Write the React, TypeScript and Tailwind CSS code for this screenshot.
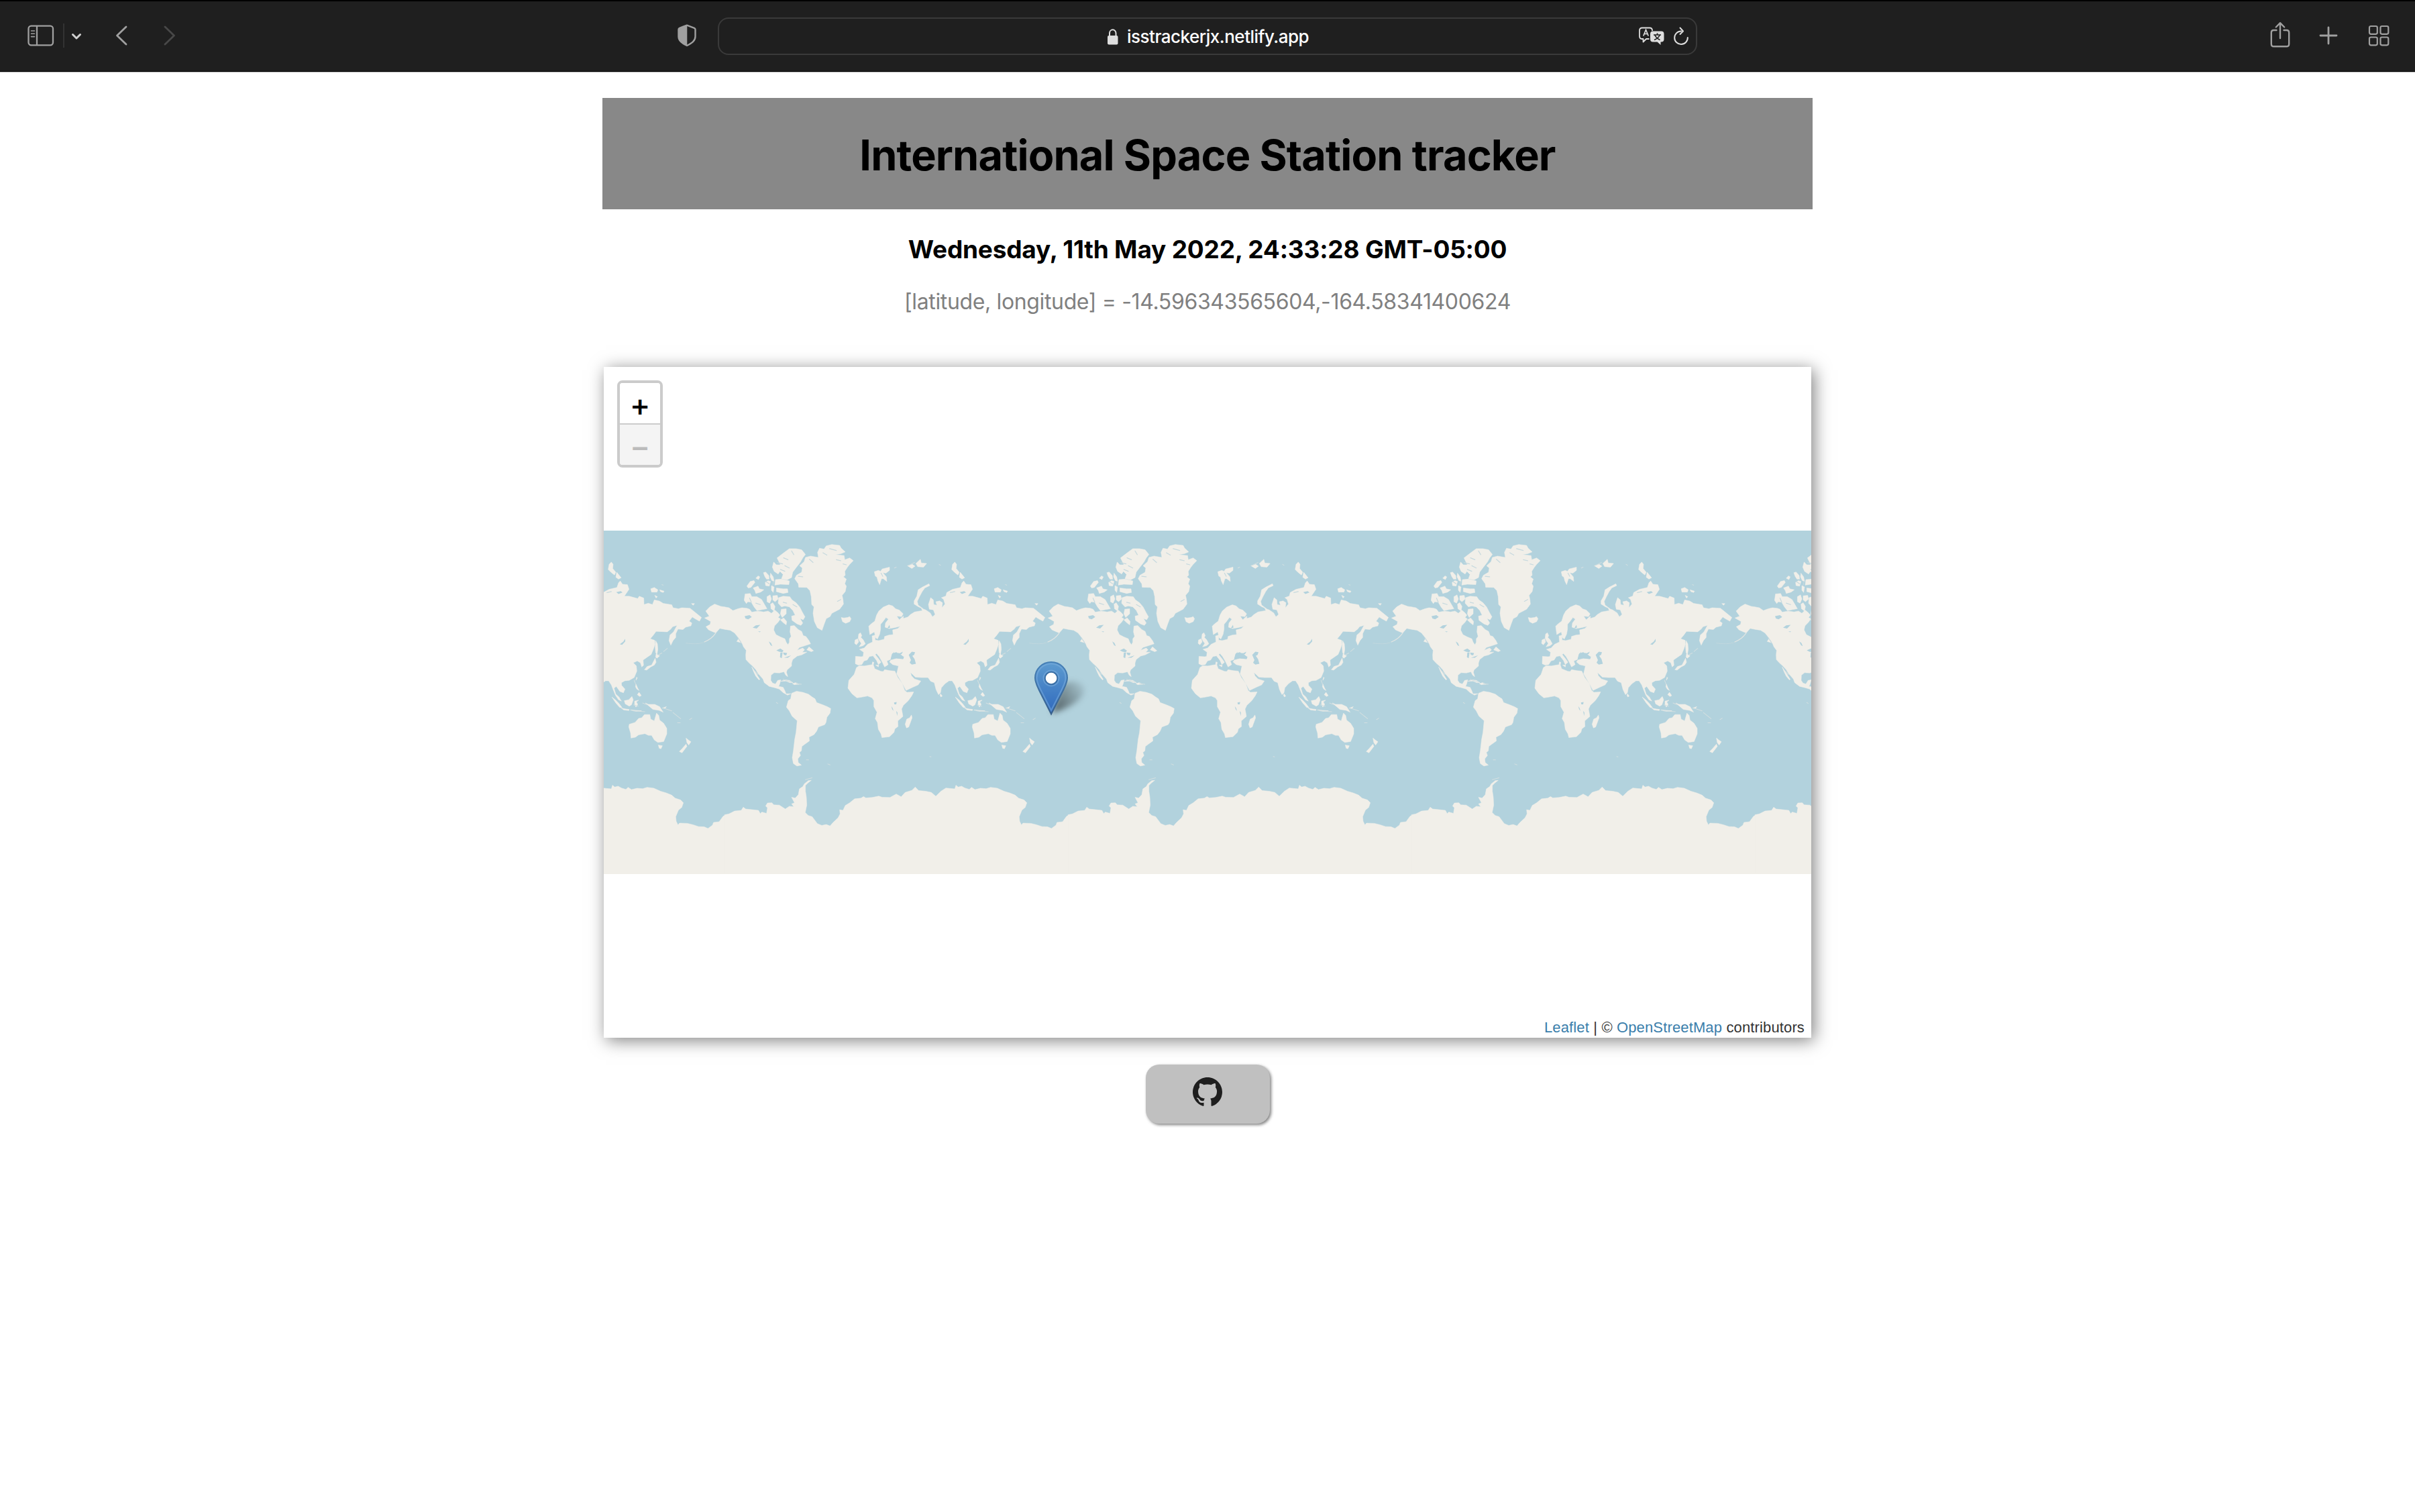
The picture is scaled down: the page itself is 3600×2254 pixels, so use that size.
import React from "react";

const WORLD_WIDTH = 512;
const WORLD_OFFSETS = [-2, -1, 0, 1, 2, 3];

const LAND = [
  // North America
  "M0 362L20 366 38 378 60 370 78 366 100 368 112 372 122 385 150 380 175 384 195 380 210 390 225 376 240 388 248 398 240 408 250 414 240 428 224 444 220 462 230 482 250 492 270 500 276 515 284 526 290 515 290 500 298 490 293 470 295 445 312 443 330 460 345 468 352 486 364 490 378 508 385 522 360 530 335 538 325 550 350 540 358 548 348 558 368 558 345 570 325 575 305 590 300 605 300 618 280 635 277 645 283 664 274 658 266 643 245 648 222 647 208 658 207 680 215 692 228 696 238 680 252 678 246 698 242 706 262 710 270 725 275 738 297 738 282 744 262 733 245 718 225 712 200 706 178 690 172 674 150 650 140 634 125 618 110 605 96 590 95 570 97 550 85 535 78 518 55 512 64 498 45 475 25 463 4 460 -21 455 -39 475 -51 470 -71 462 -83 448 -64 438 -62 425 -89 410 -68 402 -84 380 -66 362 -44 350 -16 360Z",
  "M122 622L136 642 146 658 158 676 154 678 140 662 130 642Z",
  "M368 548L378 535 384 540 398 552 388 556Z",
  // Arctic archipelago
  "M235 150L265 128 290 110 320 110 345 115 362 135 350 150 340 168 322 190 305 212 300 235 280 245 255 240 262 222 248 208 240 220 222 208 214 190 220 168 232 180 250 180Z",
  "M228 244L255 242 290 250 288 266 250 264 225 268Z",
  "M232 280L262 284 282 284 284 300 262 304 232 296Z",
  "M100 272L115 252 132 248 136 256 118 278 106 280Z",
  "M128 280L150 272 156 284 176 288 162 298 140 304 136 292Z",
  "M140 238L150 228 158 232 152 244Z",
  "M174 214L184 211 198 226 200 242 188 242 180 230Z",
  "M182 256L195 248 206 252 200 272 184 270Z",
  "M206 216L218 232 222 252 212 248 204 232Z",
  "M210 270L222 276 218 300 210 290Z",
  "M92 306L115 304 122 318 145 318 166 330 178 350 190 370 168 374 145 378 132 362 120 342 104 340 98 348 88 334Z",
  "M190 318L204 310 210 328 202 346 190 340Z",
  "M216 314L236 312 240 328 226 340 216 332Z",
  "M206 350L216 344 226 360 222 380 208 370Z",
  "M242 322L262 316 292 318 302 332 320 344 336 362 350 388 360 405 352 418 338 412 350 432 342 442 325 436 302 420 300 402 316 398 306 378 290 362 270 358 255 362 240 346Z",
  "M250 418L265 410 278 425 276 440 262 430Z",
  "M254 372L276 370 276 392 258 408 250 392Z",
  // Greenland
  "M480 92L515 96 522 108 540 124 520 132 496 136 535 140 538 158 560 150 576 162 560 178 550 190 538 208 540 225 532 232 545 242 538 262 545 272 540 296 526 312 530 330 532 350 515 372 480 390 472 404 455 413 446 436 436 464 415 452 402 425 396 390 400 362 390 352 388 318 382 292 368 278 332 277 330 262 314 240 322 225 345 212 348 194 336 184 356 166 362 148 385 142 420 148 416 126 425 108 445 112 455 98Z",
  // Cuba and the Caribbean
  "M252 684L272 678 290 680 306 690 292 690 276 683Z",
  "M304 694L318 690 334 697 312 699Z",
  // South America
  "M300 736L322 727 350 732 375 740 392 752 405 760 412 776 440 786 460 794 475 802 472 822 458 840 454 862 448 872 420 882 412 900 400 915 378 926 380 942 360 956 346 966 344 985 335 992 340 1005 328 1020 330 1036 344 1047 324 1051 308 1040 303 1015 308 985 314 935 320 905 325 855 302 835 290 812 277 796 285 768 296 760Z",
  // Iceland, British Isles, Svalbard and Franz Josef Land
  "M522 408L534 410 550 408 560 404 566 414 560 426 542 433 528 426Z",
  "M600 480L608 474 614 486 610 494 620 504 630 522 620 530 602 535 612 520 604 510 598 498Z",
  "M584 505L596 500 600 514 590 526 582 520Z",
  "M670 210L688 204 698 208 705 198 738 190 738 204 722 216 708 214 724 232 726 252 710 240 702 240 694 266 686 250 682 234 674 228Z",
  "M818 184L840 178 852 186 838 196Z",
  "M856 174L876 156 880 172 904 174 890 190 864 188Z",
  // Novaya Zemlya, Severnaya Zemlya and the New Siberian Islands
  "M914 262L918 270 896 280 884 296 872 318 862 338 866 354 888 370 868 362 848 350 848 336 860 316 866 288 886 276Z",
  "M1030 168L1038 178 1036 196 1050 212 1044 224 1028 212 1016 200 1020 178Z",
  "M1054 212L1074 236 1062 242 1050 234Z",
  "M1206 284L1222 278 1238 288 1234 298 1210 298Z",
  "M1246 288L1266 294 1262 300 1250 296Z",
  "M1224 312L1236 318 1230 324Z",
  "M1388 348L1402 348 1396 355Z",
  // Eurasia
  "M735 353L752 358 765 370 782 376 799 392 792 404 770 402 782 418 790 410 800 402 800 412 820 406 832 395 850 384 885 378 880 368 900 375 920 388 930 405 942 395 934 375 916 372 912 352 922 322 934 332 936 352 950 355 945 340 962 336 975 344 972 366 986 350 980 330 970 322 990 315 994 300 1020 286 1055 278 1062 258 1070 250 1080 264 1102 266 1109 286 1088 316 1110 316 1148 326 1155 316 1175 324 1176 352 1195 346 1214 352 1222 332 1245 337 1262 347 1300 353 1306 366 1330 370 1345 366 1382 368 1395 378 1410 390 1433 408 1424 424 1405 414 1392 406 1378 424 1390 432 1386 444 1362 450 1350 460 1328 458 1318 478 1318 494 1306 508 1296 528 1288 508 1292 484 1308 470 1324 442 1304 448 1296 458 1280 470 1230 468 1218 484 1204 500 1224 507 1225 525 1218 545 1208 568 1190 580 1172 592 1174 615 1166 622 1160 604 1146 596 1128 604 1142 618 1144 640 1132 668 1110 680 1090 682 1075 690 1076 702 1091 718 1084 734 1068 728 1052 706 1042 714 1050 740 1064 752 1075 770 1062 764 1048 744 1038 720 1030 700 1018 682 1004 682 986 695 970 712 966 734 957 742 946 720 938 690 922 684 910 668 880 668 854 666 832 646 836 660 850 674 878 683 866 700 842 710 812 724 800 702 770 652 778 618 752 612 738 600 744 592 768 586 800 588 803 578 788 570 780 560 760 575 758 556 748 568 742 590 726 596 732 612 716 622 708 606 704 598 692 578 680 564 674 568 690 588 700 602 688 612 680 594 664 574 648 577 638 592 624 596 614 612 598 614 585 608 586 576 612 578 620 576 622 558 604 546 625 540 640 524 662 514 660 488 674 484 674 506 690 508 714 502 716 490 735 484 754 482 752 462 775 456 786 446 760 452 735 456 718 450 720 432 733 415 722 408 710 424 698 438 698 458 694 480 684 501 676 496 670 470 650 482 645 446 655 436 672 424 680 398 690 380 710 363Z",
  "M662 600L668 602 666 612 660 610Z",
  "M676 614L690 614 688 622Z",
  // Africa and Madagascar
  "M590 625L602 617 625 618 665 611 672 630 700 641 710 642 716 634 740 638 762 640 775 668 795 694 806 724 816 732 846 730 838 746 822 768 800 788 792 804 798 836 775 856 776 880 762 890 758 905 738 924 704 928 700 912 688 892 684 862 674 846 682 818 668 794 668 768 660 756 640 748 612 753 592 756 570 738 552 714 556 680 580 654Z",
  "M836 830L839 842 824 882 814 886 808 870 815 848 828 842Z",
  // Japan, Sakhalin and Taiwan
  "M1228 508L1236 522 1238 545 1234 570 1228 560 1226 535Z",
  "M1230 566L1246 574 1234 584 1228 580Z",
  "M1226 584L1230 602 1222 614 1206 622 1188 636 1178 634 1190 620 1210 614Z",
  "M1143 666L1146 670 1140 680Z",
  // Philippines, Indonesia and New Guinea
  "M1140 696L1148 714 1154 724 1144 718 1138 708Z",
  "M1154 732L1164 746 1156 750 1146 742Z",
  "M966 738L974 748 968 752 964 746Z",
  "M1032 752L1050 766 1064 780 1078 798 1068 798 1050 778Z",
  "M1074 800L1095 804 1110 806 1108 811 1085 808Z",
  "M1088 768L1108 764 1122 750 1128 764 1120 786 1110 792 1092 782Z",
  "M1134 770L1152 766 1142 774 1148 784 1140 796 1134 784Z",
  "M1115 808L1165 812 1140 814Z",
  "M1182 778L1196 784 1224 784 1246 794 1262 818 1244 810 1216 806 1204 796Z",
  "M1258 800L1276 794 1270 802Z",
  // Australia, Tasmania and New Zealand
  "M1110 870L1136 862 1152 845 1166 842 1178 828 1202 828 1206 848 1222 856 1232 822 1242 832 1246 852 1264 866 1278 888 1278 912 1264 945 1238 949 1222 938 1210 918 1196 918 1180 911 1152 916 1138 926 1118 930 1116 908 1108 882Z",
  "M1240 960L1258 963 1252 976 1244 974Z",
  "M1364 930L1374 938 1386 946 1376 960 1368 950Z",
  "M1364 956L1368 966 1346 994 1334 988 1348 974Z",
  // Antarctica
  "M0 1262L20 1258 45 1246 75 1243 84 1229 95 1237 125 1240 152 1243 160 1257 167 1250 188 1256 192 1232 184 1224 192 1211 212 1210 220 1219 245 1220 272 1237 290 1225 310 1227 300 1215 313 1210 300 1186 316 1190 330 1175 335 1150 350 1140 357 1128 375 1114 388 1113 372 1125 362 1135 362 1160 366 1185 368 1220 361 1252 375 1265 392 1270 415 1300 435 1308 455 1304 472 1310 485 1296 508 1275 517 1258 515 1240 530 1243 540 1222 560 1210 582 1193 610 1190 622 1183 632 1189 660 1187 690 1181 705 1186 740 1187 768 1172 790 1184 808 1165 838 1156 853 1142 868 1157 900 1160 925 1165 945 1182 968 1160 990 1146 1030 1150 1035 1134 1045 1142 1060 1138 1075 1146 1095 1152 1105 1143 1120 1153 1145 1147 1170 1149 1190 1143 1220 1147 1250 1160 1275 1167 1300 1177 1315 1190 1340 1198 1352 1210 1345 1230 1330 1242 1318 1270 1320 1290 1328 1306 1335 1298 1370 1299 1395 1305 1420 1313 1445 1314 1462 1321 1482 1307 1487 1295 1512 1292 1530 1268 1545 1262 1545 1524 0 1524Z",
].join("");

const WATER = [
  "M90 402L112 398 122 406 106 416 94 412Z",
  "M126 452L140 442 160 440 144 456Z",
  "M150 468L162 468 158 472Z",
  "M198 512L208 518 214 532 206 528Z",
  "M232 550L250 542 264 552 258 558 244 556Z",
  "M250 560L260 560 256 584 248 580Z",
  "M262 560L280 562 276 572 266 570Z",
  "M266 582L298 572 284 582Z",
  "M1068 524L1084 512 1092 500 1092 512 1078 526Z",
  "M824 570L838 556 852 558 848 570 840 574 850 588 856 608 838 612 828 604 834 592Z",
  "M744 586L750 564 768 558 790 570 802 580 798 588 768 584Z",
  "M776 566L798 556 792 566 782 570Z",
  "M758 776L770 774 768 784 760 784Z",
  "M746 792L752 800 756 812 750 806Z",
  "M768 812L774 820 772 834Z",
  "M1052 298L1072 294 1080 300 1062 306Z",
  "M728 455L738 440 740 452Z",
].join("");

const FAINT =
  "M1240 570L1256 562M1264 555L1280 542M1262 800L1300 812M1306 820L1340 846M1326 864L1338 864M1380 850L1390 844M1170 778L1190 786M1128 812L1180 816M820 184L850 170M262 676L300 688M320 695L344 697M362 1110L392 1102M232 776L238 780M960 178L966 182M760 194L768 190M1256 266L1262 268M462 1042L472 1046M366 1024L376 1024M918 1010L924 1011M136 640L150 655M1132 680L1140 700M1130 786L1150 792";

function World() {
  return (
    <g transform="scale(0.33333 0.34439) translate(0 -31.9)">
      <path d={LAND} fill="#f1efe9" stroke="#f1efe9" strokeWidth="1.5" strokeLinejoin="round" />
      <path d={WATER} fill="#b2d2dd" />
      <path d={FAINT} fill="none" stroke="#d3dfe0" strokeWidth="3" strokeLinecap="round" />
      <path d="M-39 475Q-56 500 -90 514" fill="none" stroke="#e2e5e2" strokeWidth="3.5" strokeLinecap="round" />
      <path d="M-96 517Q-125 526 -172 519" fill="none" stroke="#c2d8de" strokeWidth="2.5" strokeLinecap="round" />
      <path
        d="M236 170L260 176M264 150L284 158M300 120L310 136M250 200L270 208M270 184L290 194M440 128L458 138M470 110L500 118M380 156L396 170M545 180L530 176M500 158L520 162M330 230L350 232M520 330L505 338M112 324L120 342M140 346L160 352M262 342L278 346M306 352L324 362M184 252L200 262M220 252L216 268M700 216L708 230M60 496L74 516M1010 300L1030 296"
        fill="none"
        stroke="#c6d9de"
        strokeWidth="3.5"
        strokeLinecap="round"
      />
    </g>
  );
}

function WorldMap() {
  return (
    <svg className="block h-[512px] w-[1800px] bg-[#b2d2dd]" viewBox="0 0 1800 512">
      <defs>
        <filter id="soft" x="0" y="0" width="1800" height="512" filterUnits="userSpaceOnUse" colorInterpolationFilters="sRGB">
          <feGaussianBlur stdDeviation="0.7" />
        </filter>
        <g id="world">
          <World />
        </g>
      </defs>
      <g filter="url(#soft)">
        {WORLD_OFFSETS.map((n) => (
          <use key={n} href="#world" x={180 + n * WORLD_WIDTH} />
        ))}
      </g>
      <path d="M0 511.5H1800" stroke="#f1efe9" strokeWidth="1" />
    </svg>
  );
}

function Marker() {
  return (
    <svg className="absolute left-[642px] top-[436px] h-[90px] w-[110px]" viewBox="0 0 110 90">
      <defs>
        <linearGradient id="pin" x1="0" y1="0" x2="0" y2="1">
          <stop offset="0" stopColor="#5d9bd0" />
          <stop offset="1" stopColor="#2f69bd" />
        </linearGradient>
        <linearGradient id="rim" x1="0" y1="0" x2="0" y2="1">
          <stop offset="0" stopColor="#4680b7" />
          <stop offset="1" stopColor="#38608c" />
        </linearGradient>
        <linearGradient id="cast" gradientUnits="userSpaceOnUse" x1="26" y1="70" x2="74" y2="38">
          <stop offset="0" stopColor="#3b4548" stopOpacity="0.8" />
          <stop offset="1" stopColor="#3b4548" stopOpacity="0.08" />
        </linearGradient>
        <filter id="castBlur" x="-30%" y="-30%" width="160%" height="160%" colorInterpolationFilters="sRGB">
          <feGaussianBlur stdDeviation="4" />
        </filter>
      </defs>
      <path d="M26 80L40 40C52 28 76 32 74 48C71 62 48 74 26 80Z" fill="url(#cast)" filter="url(#castBlur)" />
      <path
        d="M25 4C11.5 4 1 14.500 1 27.500C1 34 4 40 7 46L25 81.500L43 46C46 40 49 34 49 27.500C49 14.500 38.500 4 25 4Z"
        fill="url(#pin)"
        stroke="url(#rim)"
        strokeWidth="2"
      />
      <path
        d="M25 6.500C13 6.500 3.500 15.500 3.500 27.500C3.500 34 6.500 39.500 9.500 45.500L25 76L40.500 45.500C43.500 39.500 46.500 34 46.500 27.500C46.500 15.500 37 6.500 25 6.500Z"
        fill="none"
        stroke="#7fb2e0"
        strokeOpacity="0.5"
        strokeWidth="2"
      />
      <circle cx="25" cy="28" r="11.500" fill="none" stroke="#7fb2e0" strokeOpacity="0.5" strokeWidth="2" />
      <circle cx="25" cy="28" r="9.300" fill="#fff" stroke="#3a6fa5" strokeWidth="2" />
    </svg>
  );
}

function SidebarIcon() {
  return (
    <svg className="h-[32px] w-[40px]" viewBox="0 0 40 32" fill="none" stroke="#a0a0a0" strokeWidth="2.300">
      <rect x="1.500" y="1.700" width="36.500" height="28.600" rx="4" />
      <path d="M14 2V30" />
      <path d="M5.500 9H10.500M5.500 13.300H10.500M5.500 17.600H10.500" strokeWidth="1.600" strokeLinecap="round" />
    </svg>
  );
}

function ShieldIcon() {
  return (
    <svg className="h-[34px] w-[30px]" viewBox="0 0 30 34">
      <path
        d="M15 1.600L26 5.800Q27.500 6.400 27.500 8V18.500C27.500 25 22 28.500 15 32C8 28.500 2.500 25 2.500 18.500V8Q2.500 6.400 4 5.800Z"
        fill="none"
        stroke="#a0a0a0"
        strokeWidth="2.400"
        strokeLinejoin="round"
      />
      <path d="M15.300 1V32.500C8 29 2 25 2 18.500V6.500Z" fill="#a0a0a0" />
    </svg>
  );
}

function TranslateIcon() {
  return (
    <svg className="h-[28px] w-[40px]" viewBox="0 0 40 28">
      <path
        d="M16.500 18H12L7.500 22.500V18H6Q2 18 2 14V5.500Q2 1.500 6 1.500H17Q21 1.500 21 5.500V6"
        fill="none"
        stroke="#dedede"
        strokeWidth="1.800"
        strokeLinejoin="round"
      />
      <path d="M7.800 13.500L11.500 4.500L15.200 13.500M9 10.500H14" fill="none" stroke="#dedede" strokeWidth="1.700" />
      <path
        d="M22 6.500H34.500Q38.500 6.500 38.500 10.500V18.500Q38.500 22.500 34.500 22.500H33.500V27L28.500 22.500H22Q18 22.500 18 18.500V10.500Q18 6.500 22 6.500Z"
        fill="#dedede"
      />
      <path d="M23 12H34M28.500 9.500V12M25 12.500Q27 17 32.500 19.500M32 12.500Q30 17 24 19.500" fill="none" stroke="#1f1f1f" strokeWidth="1.700" />
    </svg>
  );
}

function BrowserBar() {
  return (
    <header className="flex h-[108px] w-full items-center border-b border-t-2 border-b-[#b8b8b8] border-t-black bg-[#1f1f1f] pb-px shadow-[inset_0_-1px_0_#000]">
      <div className="mb-[2px] flex w-[1070px] items-center">
        <div className="ml-[41px] flex h-[36px] items-center">
          <SidebarIcon />
          <div className="ml-[13px] h-[36px] w-[2px] bg-[#333]" />
          <svg className="ml-[10px] mt-px h-[12px] w-[16px]" viewBox="0 0 16 12" fill="none" stroke="#d0d0d0" strokeWidth="3" strokeLinecap="round" strokeLinejoin="round">
            <path d="M2.500 3.500L8 9L13.500 3.500" />
          </svg>
          <svg className="ml-[49px] h-[32px] w-[20px]" viewBox="0 0 20 32" fill="none" stroke="#a0a0a0" strokeWidth="2.800" strokeLinecap="round" strokeLinejoin="round">
            <path d="M17 3L3.500 16L17 29" />
          </svg>
          <svg className="ml-[52px] h-[32px] w-[20px]" viewBox="0 0 20 32" fill="none" stroke="#484848" strokeWidth="2.800" strokeLinecap="round" strokeLinejoin="round">
            <path d="M3 3L16.500 16L3 29" />
          </svg>
        </div>
        <div className="ml-auto mr-[31px]">
          <ShieldIcon />
        </div>
      </div>
      <div className="flex h-[56px] w-[1460px] items-center rounded-[16px] border-2 border-[#3a3a3a]">
        <div className="ml-[578px] flex items-center">
          <svg className="mt-[2px] h-[24px] w-[18px]" viewBox="0 0 18 24">
            <rect x="1" y="10" width="15.500" height="13.500" rx="2" fill="#dedede" />
            <path d="M4 11V6.500A4.750 5.200 0 0 1 13.500 6.500V11" fill="none" stroke="#dedede" strokeWidth="2" />
          </svg>
          <span className="ml-[12px] mt-px whitespace-nowrap font-['Inter'] text-[26px] font-medium leading-[32px] tracking-[-0.5px] text-white">
            isstrackerjx.netlify.app
          </span>
        </div>
        <div className="ml-auto mr-[10px] flex items-center gap-[12px]">
          <TranslateIcon />
          <svg className="h-[28px] w-[24px]" viewBox="0 0 24 28" fill="none" stroke="#dedede" strokeWidth="2" strokeLinecap="round" strokeLinejoin="round">
            <path d="M12 6.500A9.800 9.800 0 1 0 21.800 16" />
            <path d="M10.500 1.500L15 6.500L10.500 11" />
          </svg>
        </div>
      </div>
      <div className="mb-[2px] ml-auto mr-[38px] flex items-center">
        <svg className="mb-[2px] h-[40px] w-[32px]" viewBox="0 0 32 40" fill="none" stroke="#a0a0a0" strokeWidth="2.400" strokeLinecap="round" strokeLinejoin="round">
          <path d="M10.500 13H6.200Q2.800 13 2.800 16.500V33.500Q2.800 37.300 6.500 37.300H25.500Q29.200 37.300 29.200 33.500V16.500Q29.200 13 25.800 13H21.500" />
          <path d="M16 25V3M9.800 8.500L16 2.200L22.200 8.500" />
        </svg>
        <svg className="ml-[42px] h-[28px] w-[28px]" viewBox="0 0 28 28" fill="none" stroke="#a0a0a0" strokeWidth="2.800" strokeLinecap="round">
          <path d="M14 2V26M2 14H26" />
        </svg>
        <svg className="ml-[45px] h-[32px] w-[32px]" viewBox="0 0 32 32" fill="none" stroke="#a0a0a0" strokeWidth="2.200">
          <rect x="2" y="2" width="11.800" height="11.800" rx="2.200" />
          <rect x="18.500" y="2" width="11.800" height="11.800" rx="2.200" />
          <rect x="2" y="18.500" width="11.800" height="11.800" rx="2.200" />
          <rect x="18.500" y="18.500" width="11.800" height="11.800" rx="2.200" />
        </svg>
      </div>
    </header>
  );
}

function ZoomControl() {
  return (
    <div className="absolute left-[20px] top-[20px] flex w-[68px] flex-col overflow-hidden rounded-[8px] border-4 border-[#cbcbcb] font-['Inter'] text-[46px] font-medium">
      <button className="flex h-[62px] items-center justify-center border-b-2 border-[#ccc] bg-white pt-[4px] leading-none text-black">+</button>
      <button className="flex h-[60px] items-center justify-center bg-[#f4f4f4] pt-[4px] leading-none text-[#bbb]">−</button>
    </div>
  );
}

export default function App() {
  return (
    <div className="flex h-[2254px] w-[3600px] flex-col bg-white font-['Inter',sans-serif]">
      <BrowserBar />
      <main className="flex flex-col items-center pt-[38px]">
        <div className="flex h-[166px] w-[1804px] items-center justify-center bg-[#888] pt-[4px]">
          <h1 className="whitespace-nowrap text-[63px] font-bold leading-[80px] tracking-[-0.85px] text-black">
            International Space Station tracker
          </h1>
        </div>
        <h2 className="mt-[36px] whitespace-nowrap text-[37px] font-bold leading-[48px] tracking-[-0.2px] text-black">
          Wednesday, 11th May 2022, 24:33:28 GMT-05:00
        </h2>
        <p className="mt-[34px] whitespace-nowrap text-[32px] leading-[40px] tracking-[-0.36px] text-[#808080]">
          [latitude, longitude] = -14.596343565604,-164.58341400624
        </p>
        <section className="relative mt-[77px] flex h-[1000px] w-[1800px] flex-col bg-white pt-[244px] shadow-[4px_4px_24px_rgba(0,0,0,0.5)]">
          <WorldMap />
          <Marker />
          <ZoomControl />
          <div className="mt-auto flex h-[32px] items-center justify-end whitespace-pre pr-[10px] pt-[2px] font-['Liberation_Sans'] text-[22px] leading-[30px] tracking-[0.14px] text-[#333]">
            <a className="text-[#3a7eab]">Leaflet</a> | © <a className="text-[#3a7eab]">OpenStreetMap</a> contributors
          </div>
        </section>
        <button className="mt-[40px] flex h-[88px] w-[185px] items-start justify-center rounded-[20px] bg-[#c0c0c0] pt-[19px] shadow-[2px_2px_4px_rgba(0,0,0,0.5)]">
          <svg className="h-[44px] w-[44px]" viewBox="0 0 16 16" fill="#1e1e1e">
            <path d="M8 0C3.580 0 0 3.580 0 8c0 3.540 2.290 6.530 5.470 7.590.4.070.55-.17.55-.38 0-.19-.01-.82-.01-1.490-2.010.37-2.530-.49-2.690-.94-.09-.23-.48-.94-.82-1.130-.28-.15-.68-.52-.01-.53.63-.01 1.080.58 1.230.82.72 1.210 1.870.87 2.330.66.07-.52.28-.87.51-1.070-1.780-.2-3.640-.89-3.640-3.950 0-.87.31-1.590.82-2.150-.08-.2-.36-1.020.08-2.120 0 0 .67-.21 2.200.82.64-.18 1.320-.27 2-.27s1.360.09 2 .27c1.530-1.040 2.200-.82 2.200-.82.44 1.100.16 1.920.08 2.120.51.56.82 1.270.82 2.150 0 3.070-1.870 3.750-3.650 3.950.29.25.54.73.54 1.480 0 1.070-.01 1.930-.01 2.200 0 .21.15.46.55.38A8.010 8.010 0 0 0 16 8c0-4.420-3.580-8-8-8z" />
          </svg>
        </button>
      </main>
    </div>
  );
}
